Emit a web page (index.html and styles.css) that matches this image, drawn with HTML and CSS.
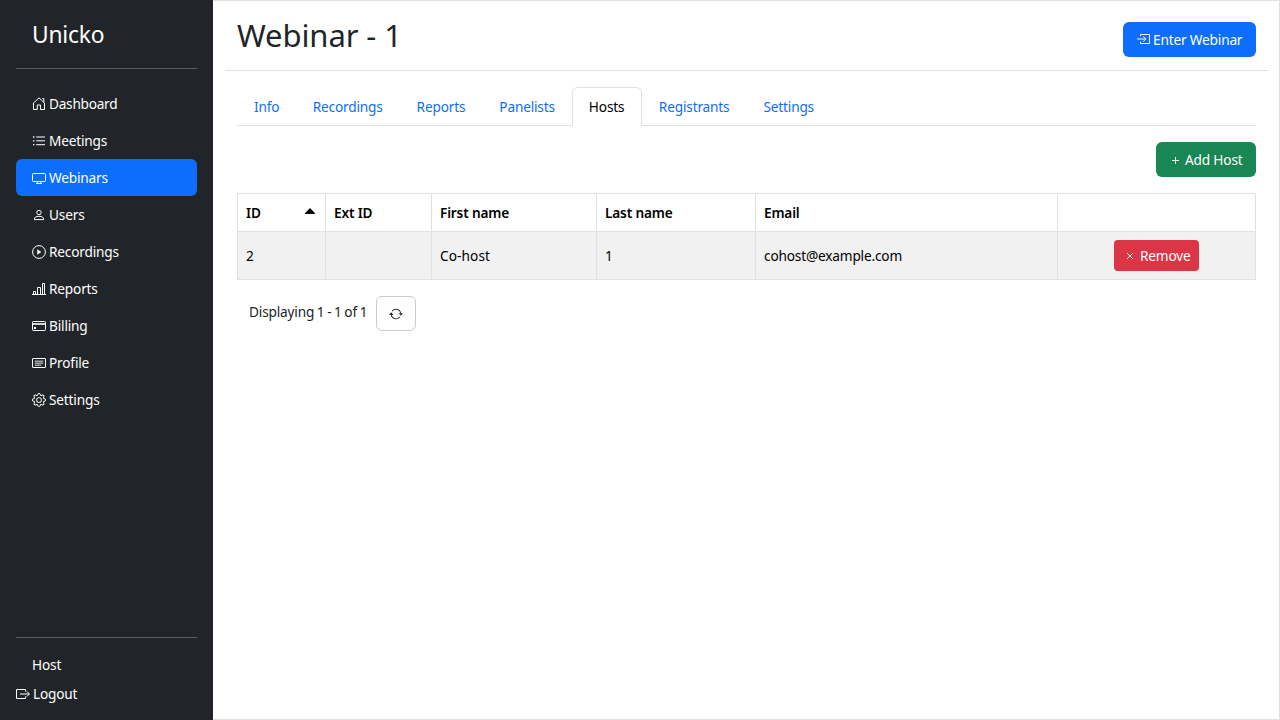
FILE: index.html
```html
<!DOCTYPE html>
<html lang="en">
<head>
<meta charset="utf-8">
<title>Webinar - 1</title>
<link rel="stylesheet" href="styles.css">
</head>
<body>
<div class="app">
  <aside class="sidebar">
    <a class="brand">Unicko</a>
    <hr class="rule">
    <nav class="nav">
      <a class="nav-link"><svg class="icon" viewBox="0 0 14 14"><path d="M1.5 6V12.5h3.8V8h3.2v4.5h4V6L7 .8 1.2 6.4M10.5 1.5h1.3v3.8"/></svg><span class="long">Dashboard</span></a>
      <a class="nav-link"><svg class="icon" viewBox="0 0 14 14"><path d="M4.2 3H13M4.2 6.8H13M4.2 10.7H13"/><path d="M1 3h1.4M1 6.8h1.4M1 10.7h1.4" stroke-width="1.3"/></svg><span>Meetings</span></a>
      <a class="nav-link active"><svg class="icon" viewBox="0 0 14 14"><rect x=".5" y="2.5" width="13" height="8" rx=".8"/><path d="M5.3 10.5v2h3.4v-2M4 12.5h6"/></svg><span>Webinars</span></a>
      <a class="nav-link"><svg class="icon" viewBox="0 0 14 14"><circle cx="7" cy="4.5" r="2.2"/><path d="M2.4 11.6c0-2.4 1.3-3.3 4.6-3.3s4.6.9 4.6 3.3z"/></svg><span>Users</span></a>
      <a class="nav-link"><svg class="icon" viewBox="0 0 14 14"><circle cx="7" cy="7" r="6.4"/><path class="solid" d="M5.2 4.3v5.4L9.3 7z"/></svg><span>Recordings</span></a>
      <a class="nav-link"><svg class="icon" viewBox="0 0 14 14"><path d="M0 12.5h14M1.5 12.5v-3h2v3M5.5 12.5v-7h3v7M10.5 12.5v-11h2v11"/></svg><span>Reports</span></a>
      <a class="nav-link"><svg class="icon" viewBox="0 0 14 14"><rect x=".5" y="2.5" width="13" height="9" rx=".8"/><path d="M.5 5h13" stroke-width="1.6"/><path d="M2 9h2" stroke-width="2"/></svg><span>Billing</span></a>
      <a class="nav-link"><svg class="icon" viewBox="0 0 14 14"><rect x=".5" y="2.5" width="13" height="9" rx=".5"/><path d="M2.8 5.2h8.4M2.8 7.2h8.4M2.8 9.2h6.4" stroke-width=".9"/></svg><span>Profile</span></a>
      <a class="nav-link"><svg class="icon" viewBox="0 0 16 16"><path class="solid" d="M8 4.754a3.246 3.246 0 1 0 0 6.492 3.246 3.246 0 0 0 0-6.492zM5.754 8a2.246 2.246 0 1 1 4.492 0 2.246 2.246 0 0 1-4.492 0z"/><path class="solid" d="M9.796 1.343c-.527-1.79-3.065-1.79-3.592 0l-.094.319a.873.873 0 0 1-1.255.52l-.292-.16c-1.64-.892-3.433.902-2.54 2.541l.159.292a.873.873 0 0 1-.52 1.255l-.319.094c-1.79.527-1.79 3.065 0 3.592l.319.094a.873.873 0 0 1 .52 1.255l-.16.292c-.892 1.64.901 3.434 2.541 2.54l.292-.159a.873.873 0 0 1 1.255.52l.094.319c.527 1.79 3.065 1.79 3.592 0l.094-.319a.873.873 0 0 1 1.255-.52l.292.16c1.64.893 3.434-.902 2.54-2.541l-.159-.292a.873.873 0 0 1 .52-1.255l.319-.094c1.79-.527 1.79-3.065 0-3.592l-.319-.094a.873.873 0 0 1-.52-1.255l.16-.292c.893-1.64-.902-3.433-2.541-2.54l-.292.159a.873.873 0 0 1-1.255-.52l-.094-.319zm-2.633.283c.246-.835 1.428-.835 1.674 0l.094.319a1.873 1.873 0 0 0 2.693 1.115l.291-.16c.764-.415 1.6.42 1.184 1.185l-.159.292a1.873 1.873 0 0 0 1.116 2.692l.318.094c.835.246.835 1.428 0 1.674l-.319.094a1.873 1.873 0 0 0-1.115 2.693l.16.291c.415.764-.42 1.6-1.185 1.184l-.291-.159a1.873 1.873 0 0 0-2.693 1.116l-.094.318c-.246.835-1.428.835-1.674 0l-.094-.319a1.873 1.873 0 0 0-2.692-1.115l-.292.16c-.764.415-1.6-.42-1.184-1.185l.159-.291A1.873 1.873 0 0 0 1.945 8.93l-.319-.094c-.835-.246-.835-1.428 0-1.674l.319-.094A1.873 1.873 0 0 0 3.06 4.377l-.16-.292c-.415-.764.42-1.6 1.185-1.184l.292.159a1.873 1.873 0 0 0 2.692-1.115l.094-.319z"/></svg><span>Settings</span></a>
    </nav>
    <hr class="rule rule-bottom">
    <div class="user">Host</div>
    <a class="logout"><svg class="icon" viewBox="0 0 14 14"><path d="M9.5 4.5v-2h-9v9h9v-2M4 7h9.3M10.8 4.4 13.4 7l-2.6 2.6"/></svg><span>Logout</span></a>
  </aside>
  <main class="main">
    <header class="header">
      <h1 class="title">Webinar - 1</h1>
      <a class="btn btn-primary"><svg class="icon" viewBox="0 0 14 14"><path d="M4.5 4.2V2.5h9v9h-9V9.8M1 7h8.6M7.2 4.4 9.8 7 7.2 9.6"/></svg><span>Enter Webinar</span></a>
    </header>
    <div class="content">
      <nav class="tabs">
        <a class="tab">Info</a><a class="tab">Recordings</a><a class="tab">Reports</a><a class="tab">Panelists</a><a class="tab active">Hosts</a><a class="tab">Registrants</a><a class="tab">Settings</a>
      </nav>
      <div class="toolbar"><a class="btn btn-success"><svg class="icon" viewBox="0 0 14 14"><path d="M6.5 4v7M3 7.5h7"/></svg><span>Add Host</span></a></div>
      <table class="grid">
        <colgroup><col class="c-id"><col class="c-ext"><col class="c-first"><col class="c-last"><col class="c-email"><col></colgroup>
        <thead><tr><th><div class="sorted">ID<svg class="caret" viewBox="0 0 10 6"><path d="M5 0 10 5.2V6H0v-.8z"/></svg></div></th><th>Ext ID</th><th>First name</th><th>Last name</th><th>Email</th><th></th></tr></thead>
        <tbody><tr><td>2</td><td></td><td class="name">Co-host</td><td>1</td><td>cohost@example.com</td><td class="action"><a class="btn btn-danger"><svg class="icon" viewBox="0 0 14 14"><path d="m4.2 4.2 5.6 5.6M9.8 4.2 4.2 9.8"/></svg><span>Remove</span></a></td></tr></tbody>
      </table>
      <div class="pager"><span class="count">Displaying 1 - 1 of 1</span><a class="refresh"><svg class="icon" viewBox="0 0 16 16"><path class="solid" d="M11.534 7h3.932a.25.25 0 0 1 .192.41l-1.966 2.36a.25.25 0 0 1-.384 0l-1.966-2.36a.25.25 0 0 1 .192-.41zm-11 2h3.932a.25.25 0 0 0 .192-.41L2.692 6.23a.25.25 0 0 0-.384 0L.342 8.59A.25.25 0 0 0 .534 9z"/><path class="solid" d="M8 3c-1.552 0-2.94.707-3.857 1.818a.5.5 0 1 1-.771-.636A6.002 6.002 0 0 1 13.917 7H12.9A5.002 5.002 0 0 0 8 3zM3.1 9a5.002 5.002 0 0 0 8.757 2.182.5.5 0 1 1 .771.636A6.002 6.002 0 0 1 2.083 9H3.1z"/></svg></a></div>
    </div>
  </main>
</div>
</body>
</html>
```
FILE: styles.css
```css
* { box-sizing: border-box; }
body { margin: 0; font: 13.65px/21px "Noto Sans", sans-serif; letter-spacing: -.17px; color: #212529; background: #fff; }
.app { display: flex; height: 720px; }
.icon { width: 14px; height: 14px; margin-top: 1px; flex: none; fill: none; stroke: currentColor; stroke-width: 1; }
.icon .solid { fill: currentColor; stroke: none; }
.sidebar { width: 213px; flex: none; display: flex; flex-direction: column; padding: 16px; color: #fff; background: #212529; }
.brand { padding: 1px 16px 0; height: 36px; font-size: 22.8px; line-height: 36px; letter-spacing: -.2px; }
.rule { width: 100%; height: 1px; flex: none; margin: 16px 0; border: 0; background: #5a5d60; }
.rule-bottom { margin-bottom: 17px; }
.nav { flex: 1; }
.nav-link { display: flex; align-items: center; gap: 3px; height: 37px; padding: 0 16px; border-radius: 6px; }
.nav-link.active { background: #0d6efd; }
.long { letter-spacing: -.25px; }
.user { padding: 0 16px; margin-top: -1px; }
.logout { display: flex; align-items: center; gap: 3px; margin: 8px 0 0; }
.main { flex: 1; border: 1px solid #dee2e6; border-left: 0; }
.header { display: flex; justify-content: space-between; align-items: flex-start; height: 70px; margin: 0 11px 0 12px; padding: 21px 12px 0; border-bottom: 1px solid #dee2e6; }
.title { margin: -6px 0 0; font-size: 31px; line-height: 38px; font-weight: 400; letter-spacing: -.1px; }
.btn { display: inline-flex; align-items: center; gap: 3px; height: 35px; padding: 0 13px; border-radius: 6px; color: #fff; white-space: nowrap; }
.btn-primary { width: 133px; background: #0d6efd; }
.btn-primary .icon { margin: -1px 0 0; }
.btn-success { width: 100px; gap: 2px; background: #198754; }
.btn-danger { width: 85px; height: 31px; padding: 0 9px; border-radius: 4px; background: #dc3545; }
.content { padding: 16px 23px 0 24px; }
.tabs { display: flex; height: 39px; border-bottom: 1px solid #dee2e6; }
.tab { height: 39px; padding: 9px 17px 0; color: #0d6efd; }
.tab.active { width: 70px; padding: 8px 16px 0; border: 1px solid #dee2e6; border-bottom-color: #fff; border-radius: 6px 6px 0 0; color: #000; background: #fff; }
.tab:first-child { width: 58.7px; }
.toolbar { display: flex; justify-content: flex-end; margin: 16px 0; }
.grid { width: 1019px; table-layout: fixed; border-collapse: collapse; color: #000; }
.grid th, .grid td { padding: 0 8px; border: 1px solid #dee2e6; text-align: left; }
.grid th { height: 38px; font-weight: 650; }
.grid td { height: 48px; background: #f1f1f1; }
.grid .name { letter-spacing: .1px; }
.grid .action { text-align: center; vertical-align: middle; line-height: 0; }
.action .btn { line-height: 21px; }
.c-id { width: 88px; } .c-ext { width: 106px; } .c-first { width: 165px; } .c-last { width: 159px; } .c-email { width: 302px; }
.sorted { display: flex; justify-content: space-between; }
.caret { width: 10px; height: 6px; margin: 6px 2px 0 0; }
.pager { display: flex; gap: 10px; padding: 16px 12px; }
.count { width: 117px; padding-top: 5px; white-space: nowrap; word-spacing: -.7px; }
.refresh { display: flex; align-items: center; justify-content: center; width: 40px; height: 35px; border: 1px solid #ccc; border-radius: 6px; }
.refresh .icon { margin-top: 0; }
```
